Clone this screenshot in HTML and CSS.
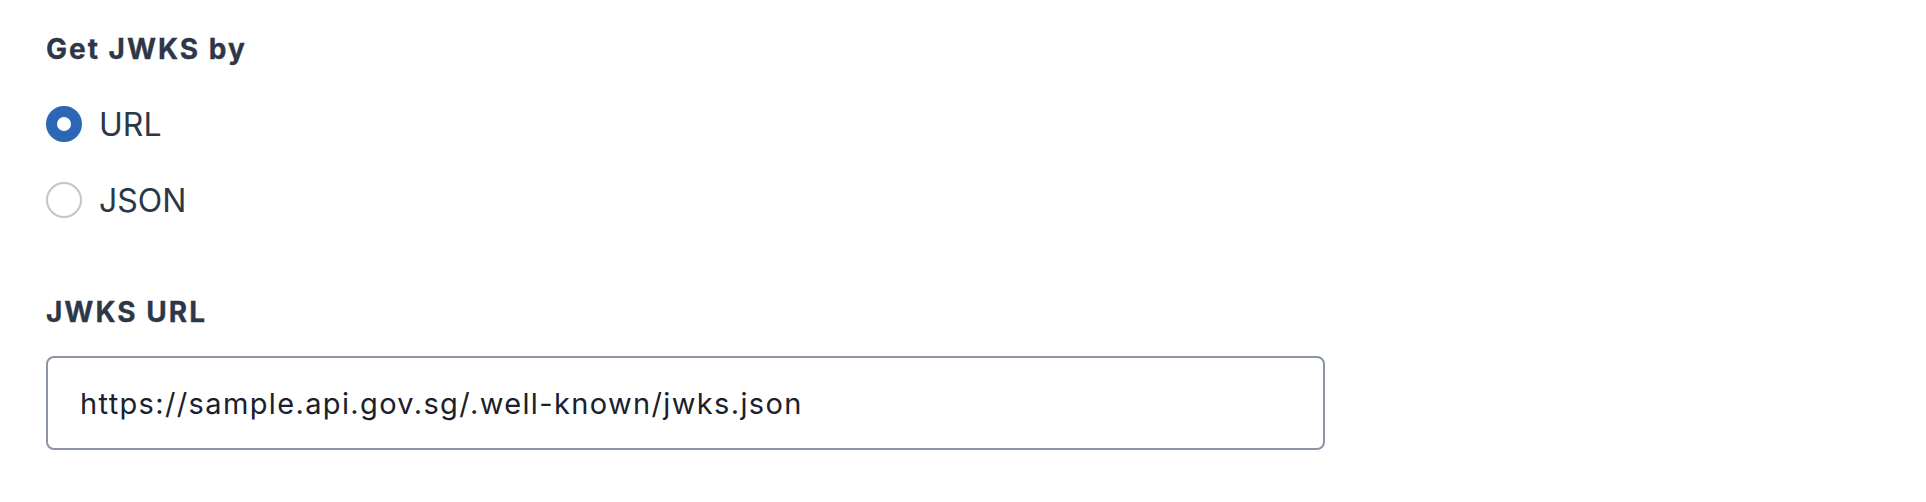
FILE: index.html
```html
<!DOCTYPE html>
<html lang="en">
<head>
<meta charset="utf-8">
<title>JWKS</title>
<link rel="stylesheet" href="styles.css">
</head>
<body>
  <form class="form">
    <fieldset class="group">
      <legend class="label">Get JWKS by</legend>
      <div class="radios">
        <label class="radio">
          <input type="radio" name="by" value="url" checked>
          <span class="dot"></span>
          <span class="radio-text">URL</span>
        </label>
        <label class="radio">
          <input type="radio" name="by" value="json">
          <span class="dot"></span>
          <span class="radio-text">JSON</span>
        </label>
      </div>
    </fieldset>
    <div class="field">
      <label class="label" for="jwks-url">JWKS URL</label>
      <input class="text-input" id="jwks-url" type="text" value="https://sample.api.gov.sg/.well-known/jwks.json">
    </div>
  </form>
</body>
</html>
```
FILE: styles.css
```css
* { box-sizing: border-box; }
html, body { margin: 0; padding: 0; background: #ffffff; }
body {
  font-family: Inter, "Noto Sans", "Liberation Sans", sans-serif;
  color: #2d3748;
}
.form {
  padding: 32px 0 0 46px;
  display: flex;
  flex-direction: column;
  gap: 77px;
}
.group {
  border: 0;
  margin: 0;
  padding: 0;
  min-width: 0;
}
.label {
  display: block;
  padding: 0;
  font-size: 28px;
  line-height: 34px;
  font-weight: 700;
  letter-spacing: 2px;
  -webkit-text-stroke: 0.3px #2d3748;
  color: #2d3748;
}
.group .label { margin-bottom: 40px; }
.radios {
  display: flex;
  flex-direction: column;
  gap: 40px;
}
.radio {
  display: flex;
  align-items: center;
  gap: 17px;
  height: 36px;
  cursor: pointer;
}
.radio input {
  position: absolute;
  opacity: 0;
  width: 0;
  height: 0;
  margin: 0;
}
.dot {
  width: 36px;
  height: 36px;
  border-radius: 50%;
  border: 2px solid #c4c4c4;
  background: #ffffff;
  flex: none;
}
.radio input:checked + .dot {
  border: 11px solid #2b67b5;
}
.radio-text {
  font-size: 32px;
  line-height: 36px;
  color: #2d3748;
  padding-top: 2px;
}
.field .label { margin-bottom: 27px; }
.text-input {
  display: block;
  width: 1279px;
  height: 94px;
  border: 2px solid #8b95a5;
  border-radius: 8px;
  padding: 0 32px;
  font-family: Inter, "Noto Sans", "Liberation Sans", sans-serif;
  font-size: 29px;
  letter-spacing: 1.36px;
  color: #1a202c;
  background: #ffffff;
  outline: none;
}
```
